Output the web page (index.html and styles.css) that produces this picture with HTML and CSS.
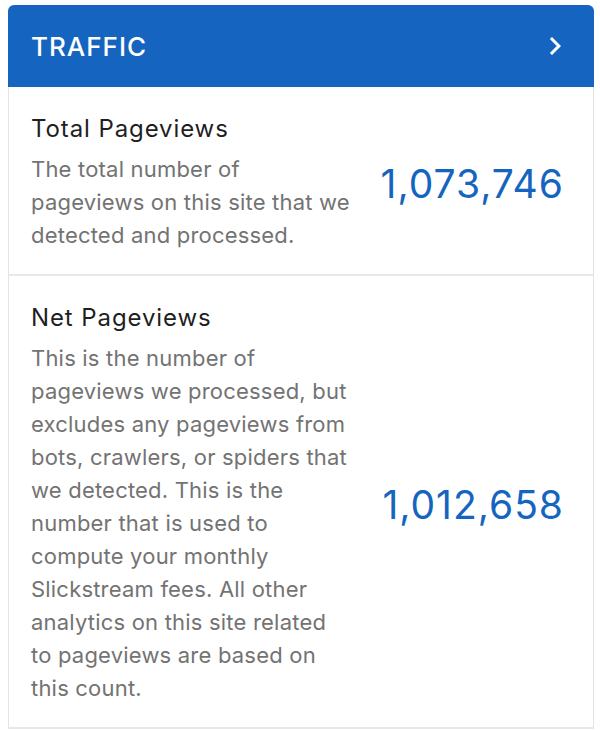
FILE: index.html
```html
<!DOCTYPE html>
<html lang="en">
<head>
<meta charset="utf-8">
<title>Traffic</title>
<link rel="stylesheet" href="styles.css">
</head>
<body>
<div class="card">
  <div class="card-header">
    <span class="card-title">TRAFFIC</span>
    <svg class="chevron" viewBox="0 0 24 24" width="36" height="36" aria-hidden="true">
      <path d="M10 6L8.59 7.41 13.17 12l-4.58 4.59L10 18l6-6z" fill="#ffffff"/>
    </svg>
  </div>
  <div class="row">
    <div class="info">
      <div class="label">Total Pageviews</div>
      <div class="desc">The total number of pageviews on this site that we detected and processed.</div>
    </div>
    <div class="value">1,073,746</div>
  </div>
  <div class="row">
    <div class="info">
      <div class="label">Net Pageviews</div>
      <div class="desc">This is the number of pageviews we processed, but excludes any pageviews from bots, crawlers, or spiders that we detected. This is the number that is used to compute your monthly Slickstream fees. All other analytics on this site related to pageviews are based on this count.</div>
    </div>
    <div class="value">1,012,658</div>
  </div>
</div>
</body>
</html>
```

FILE: styles.css
```css
html, body {
  background: #ffffff;
}
body {
  margin: 5px 6px 0 8px;
  font-family: Inter, "Noto Sans", "Liberation Sans", sans-serif;
}
.card {
  width: 586px;
}
.card-header {
  height: 82px;
  background: #1565c0;
  border-radius: 6px 6px 0 0;
  display: flex;
  align-items: center;
  justify-content: space-between;
  padding: 0 21px 0 23px;
  box-sizing: border-box;
}
.card-title {
  color: #ffffff;
  font-size: 26px;
  font-weight: 500;
  letter-spacing: 1px;
}
.chevron {
  display: block;
}
.row {
  display: flex;
  align-items: center;
  justify-content: space-between;
  border-left: 1px solid #e3e3e3;
  border-right: 1px solid #e3e3e3;
  border-bottom: 2px solid #e8e8e8;
  padding: 27px 30px 22px 22px;
}
.info {
  width: 322px;
}
.label {
  font-size: 24px;
  line-height: 30px;
  letter-spacing: 0.9px;
  color: #1f1f1f;
  margin-bottom: 9px;
}
.desc {
  font-size: 22px;
  line-height: 33px;
  letter-spacing: 0.2px;
  color: #737373;
}
.value {
  font-size: 39px;
  letter-spacing: 1px;
  margin-right: -1px;
  color: #1565c0;
}
```
